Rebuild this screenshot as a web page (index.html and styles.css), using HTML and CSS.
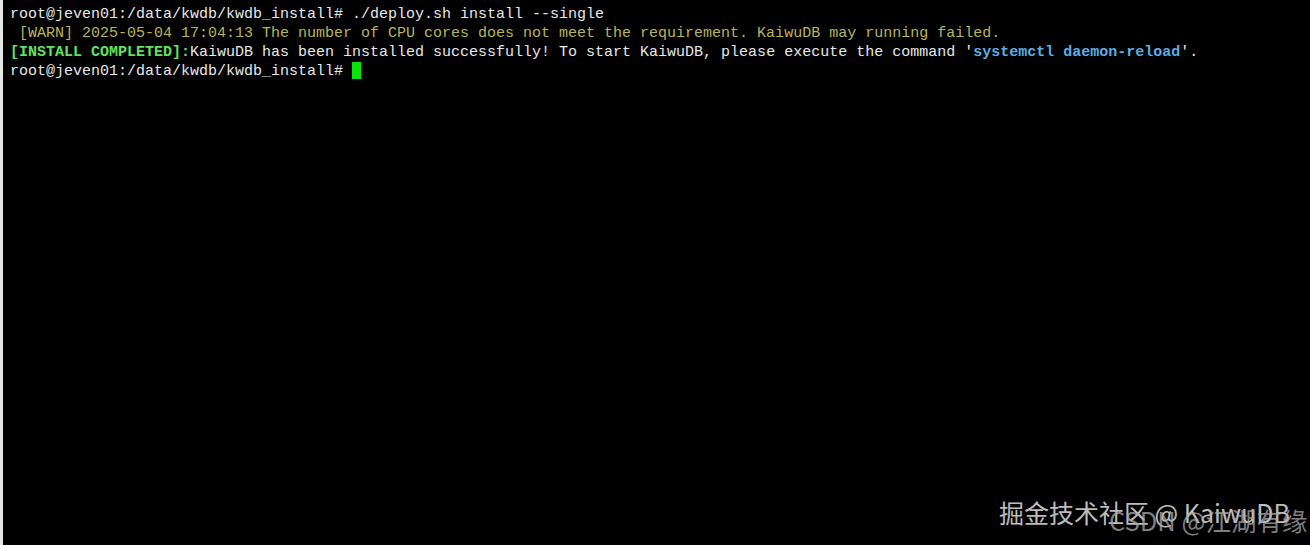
FILE: index.html
```html
<!DOCTYPE html>
<html>
<head>
<meta charset="utf-8">
<link rel="stylesheet" href="styles.css">
</head>
<body>
<div class="screen">
  <div class="term">
    <div class="line">root@jeven01:/data/kwdb/kwdb_install# ./deploy.sh install --single</div>
    <div class="line warn"> [WARN] 2025-05-04 17:04:13 The number of CPU cores does not meet the requirement. KaiwuDB may running failed.</div>
    <div class="line"><span class="ok">[INSTALL COMPLETED]:</span>KaiwuDB has been installed successfully! To start KaiwuDB, please execute the command '<span class="cmd">systemctl daemon-reload</span>'.</div>
    <div class="line">root@jeven01:/data/kwdb/kwdb_install# <span class="cursor"></span></div>
  </div>
  <div class="wm wm-juejin">掘金技术社区 @ KaiwuDB</div>
  <div class="wm wm-csdn">CSDN @江湖有缘</div>
</div>
</body>
</html>
```

FILE: styles.css
```css
html, body {
  margin: 0;
  padding: 0;
  background: #000;
}
.screen {
  position: relative;
  width: 1310px;
  height: 545px;
  background: #000;
  border-left: 3px solid #e6e6e6;
  box-sizing: border-box;
  overflow: hidden;
}
.term {
  padding: 5px 0 0 7px;
  font-family: "Liberation Mono", "DejaVu Sans Mono", monospace;
  font-size: 15px;
  line-height: 19px;
  color: #e8e8e8;
}
.line {
  white-space: pre;
  height: 19px;
}
.warn {
  color: #b9b45a;
}
.ok {
  color: #62e262;
  font-weight: bold;
}
.cmd {
  color: #5aaee6;
  font-weight: bold;
}
.cursor {
  display: inline-block;
  width: 9px;
  height: 17px;
  background: #0be40b;
  vertical-align: -4px;
}
.wm {
  position: absolute;
  font-family: "Noto Sans CJK SC", "Noto Sans", sans-serif;
  line-height: 30px;
  white-space: nowrap;
}
.wm-juejin {
  left: 996px;
  top: 497px;
  font-size: 25px;
  color: rgba(225, 225, 225, 0.85);
}
.wm-csdn {
  left: 1106px;
  top: 505px;
  font-size: 25.5px;
  color: rgba(170, 170, 170, 0.75);
}
```
